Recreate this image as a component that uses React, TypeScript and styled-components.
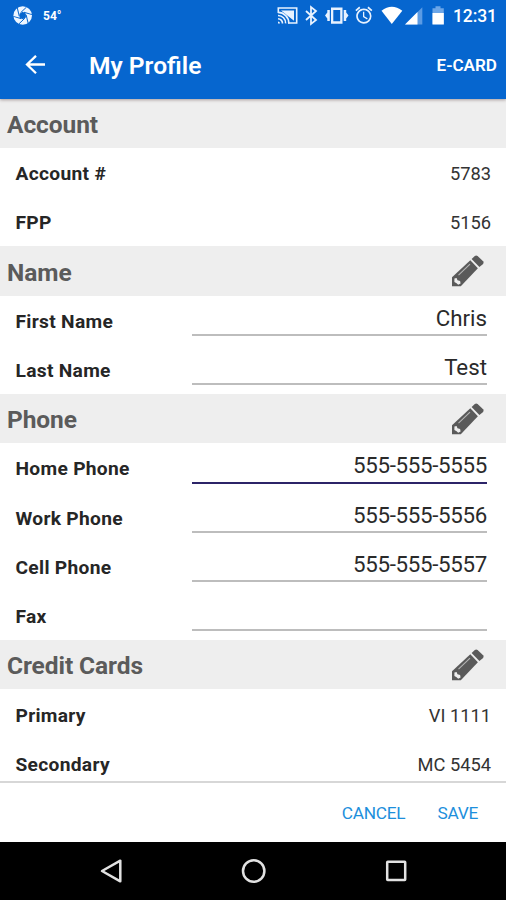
import React from "react";
import styled, { createGlobalStyle } from "styled-components";
import { MdAlarm } from "react-icons/md";

const GlobalStyle = createGlobalStyle`
  * { box-sizing: border-box; }
  body { margin: 0; background: #fff; font-family: Roboto, sans-serif; }
`;

const Screen = styled.div`
  width: 506px;
  height: 900px;
  display: flex;
  flex-direction: column;
  overflow: hidden;
  background: #fff;
`;

const Header = styled.header`
  flex: none;
  height: 98.8px;
  background: #0666cf;
  color: #fff;
  box-shadow: 0 1px 3px rgba(70, 40, 40, 0.42);
  z-index: 1;
`;

const StatusBar = styled.div`
  height: 32px;
  display: flex;
  align-items: center;
  padding: 0 10px 0 13px;
`;

const Temperature = styled.span`
  flex: 1;
  margin-left: 10px;
  font-size: 12px;
  font-weight: 700;
  line-height: 32px;
  height: 32px;
`;

const StatusIcons = styled.svg`
  display: block;
  flex: none;
`;

const Clock = styled.span`
  width: 43px;
  margin-left: 9px;
  font-size: 17.5px;
  font-weight: 500;
  letter-spacing: -0.1px;
  white-space: nowrap;
`;

const Toolbar = styled.div`
  height: 66px;
  display: flex;
  align-items: center;
  padding: 0 9px 0 25px;
`;

const Title = styled.h1`
  flex: 1;
  margin: 1px 0 0 43px;
  font-size: 24.6px;
  font-weight: 600;
  line-height: 30px;
`;

const CardLink = styled.span`
  font-size: 17.1px;
  font-weight: 600;
`;

const Content = styled.main`
  flex: 1;
  min-height: 0;
  overflow: hidden;
`;

const SectionHeader = styled.h2`
  height: 49.23px;
  margin: 0;
  display: flex;
  align-items: center;
  justify-content: space-between;
  padding: 2px 22px 0 7px;
  background: #eee;
  color: #5b5b5b;
  font-size: 24.5px;
  font-weight: 700;
  letter-spacing: -0.08px;
`;

const PencilIcon = styled.svg`
  display: block;
  width: 34px;
  height: 34px;
  margin: -2px -1px 0 0;
`;

const Row = styled.div`
  height: 49.23px;
  display: flex;
  align-items: center;
  padding: 2px 15px 0 15.5px;
  color: #262626;
`;

const Label = styled.span`
  width: 176.5px;
  font-size: 19.2px;
  font-weight: 700;
  letter-spacing: 0.3px;
`;

const Value = styled.span`
  flex: 1;
  text-align: right;
  font-size: 18.3px;
  color: #333;
`;

const Field = styled.div<{ $active?: boolean; $numeric?: boolean }>`
  flex: 1;
  align-self: flex-start;
  height: 38.2px;
  margin-right: 4px;
  padding-top: 5px;
  border-bottom: 2px solid ${(p) => (p.$active ? "#2c2468" : "#bdbdbd")};
  text-align: right;
  font-size: 22.3px;
  letter-spacing: ${(p) => (p.$numeric ? "-0.3px" : "0")};
  line-height: 30px;
  color: #2a2a2a;
`;

const Actions = styled.footer`
  flex: none;
  height: 61px;
  display: flex;
  align-items: center;
  justify-content: flex-end;
  gap: 32px;
  padding-right: 28px;
  border-top: 2px solid #d7d7d7;
`;

const Action = styled.span`
  font-size: 17.3px;
  letter-spacing: -0.25px;
  color: #1d8fdc;
`;

const NavBar = styled.nav`
  flex: none;
  height: 58px;
  background: #000;
  display: flex;
  justify-content: center;
  align-items: center;
`;

type Entry = { label: string; value: string; active?: boolean };
type Section = { title: string; editable?: boolean; input?: "text" | "phone"; rows: Entry[] };

const sections: Section[] = [
  { title: "Account", rows: [{ label: "Account #", value: "5783" }, { label: "FPP", value: "5156" }] },
  {
    title: "Name",
    editable: true,
    input: "text",
    rows: [{ label: "First Name", value: "Chris" }, { label: "Last Name", value: "Test" }],
  },
  {
    title: "Phone",
    editable: true,
    input: "phone",
    rows: [
      { label: "Home Phone", value: "555-555-5555", active: true },
      { label: "Work Phone", value: "555-555-5556" },
      { label: "Cell Phone", value: "555-555-5557" },
      { label: "Fax", value: "" },
    ],
  },
  {
    title: "Credit Cards",
    editable: true,
    rows: [{ label: "Primary", value: "VI 1111" }, { label: "Secondary", value: "MC 5454" }],
  },
];

const blades = [0, 60, 120, 180, 240, 300];

function Pencil() {
  return (
    <PencilIcon viewBox="0 0 34 34">
      <path d="M1 23.2L19.3 6.2l7.6 8.1L9.8 32.2H1z" fill="#5a5a5a" />
      <path d="M20.6 5l3.2-3.1q1.4-1 2.8 0l5.5 5.4q1 1.4 0 2.6L28.4 13z" fill="#5a5a5a" />
      <path d="M3.4 24.6l2.2-.6.9 2.2 2.6.7.5 2.6-2.4 1.2-1.6-1.4-2.2-1.3z" fill="#eee" />
      <path d="M7.5 21.2L19 10.2" stroke="#b5b5b5" strokeWidth="1.1" />
    </PencilIcon>
  );
}

function Aperture() {
  return (
    <StatusIcons width="20" height="20" viewBox="0 0 20 20">
      <circle cx="9.7" cy="9.5" r="9.3" fill="#eef6ff" />
      <g stroke="#0666cf" strokeWidth="1">
        {blades.map((a) => (
          <path key={a} d="M7.5 6.8L13.6 1" transform={`rotate(${a} 9.7 9.5)`} />
        ))}
      </g>
      <path d="M9.7 5.8l3.2 1.9v3.7l-3.2 1.9-3.2-1.9V7.7z" fill="#0666cf" />
    </StatusIcons>
  );
}

function SystemIcons() {
  return (
    <StatusIcons width="168" height="32" viewBox="276 0 168 32">
      <g fill="none" stroke="#e8f2ff" strokeWidth="1.6">
        <path d="M278.3 13V8h18.4v15H288" />
        <path d="M278 15.5a7.5 7.5 0 0 1 7.6 7.9M278 18.7a4.6 4.6 0 0 1 4.5 4.7M278 12.4a10.8 10.8 0 0 1 10.8 11" />
      </g>
      <path d="M278 21.5a2 2 0 0 1 2 2h-2zM281 10.5h13v10.3z" fill="#e8f2ff" />
      <path d="M306 11l10 9-5 4V7l5 4-10 9" fill="none" stroke="#e8f2ff" strokeWidth="1.8" />
      <g fill="#e8f2ff">
        <path d="M331 7.5h11.5v16.2H331zm2.3 2.5v11.2h6.9V10z" fillRule="evenodd" />
        <path d="M329.8 10v11h-2.5v-2.5l-2.3-3 2.3-3V10zM343.7 10v11h2.5v-2.5l2.3-3-2.3-3V10z" />
      </g>
      <MdAlarm x="353.6" y="5" size={20.5} color="#e8f2ff" />
      <path d="M381.5 10.7Q391.8 2.7 402.3 10.7L391.8 24z" fill="#fff" />
      <path d="M422.3 7.2v17.3H405z" fill="#5b9be4" />
      <path d="M417.5 12v12.5H405z" fill="#fff" />
      <path d="M432.5 8.2h3V6.3h5v1.9h3.3v16.2h-11.3z" fill="#6ca6e8" />
      <path d="M432.5 13h11.3v11.4h-11.3z" fill="#fff" />
    </StatusIcons>
  );
}

function NavIcons() {
  return (
    <svg width="506" height="58" viewBox="0 842 506 58" fill="none" stroke="#e2e2e2" strokeWidth="2.5">
      <path d="M120.3 860.7v20.6L102 871z" strokeLinejoin="round" />
      <circle cx="253.7" cy="871" r="10.7" />
      <rect x="387.2" y="861.7" width="18" height="18.3" rx="0.5" />
    </svg>
  );
}

export default function App() {
  return (
    <>
      <GlobalStyle />
      <Screen>
        <Header>
          <StatusBar>
            <Aperture />
            <Temperature>54°</Temperature>
            <SystemIcons />
            <Clock>12:31</Clock>
          </StatusBar>
          <Toolbar>
            <svg width="21" height="20" viewBox="0 0 21 20" fill="none" stroke="#fff" strokeWidth="2.3">
              <path d="M20 9.5H2M11 0.8L2 9.5l9 8.8" />
            </svg>
            <Title>My Profile</Title>
            <CardLink>E-CARD</CardLink>
          </Toolbar>
        </Header>
        <Content>
          {sections.map((section) => (
            <section key={section.title}>
              <SectionHeader>
                {section.title}
                {section.editable && <Pencil />}
              </SectionHeader>
              {section.rows.map((row) => (
                <Row key={row.label}>
                  <Label>{row.label}</Label>
                  {section.input ? (
                    <Field $active={row.active} $numeric={section.input === "phone"}>
                      {row.value}
                    </Field>
                  ) : (
                    <Value>{row.value}</Value>
                  )}
                </Row>
              ))}
            </section>
          ))}
        </Content>
        <Actions>
          <Action>CANCEL</Action>
          <Action>SAVE</Action>
        </Actions>
        <NavBar>
          <NavIcons />
        </NavBar>
      </Screen>
    </>
  );
}
